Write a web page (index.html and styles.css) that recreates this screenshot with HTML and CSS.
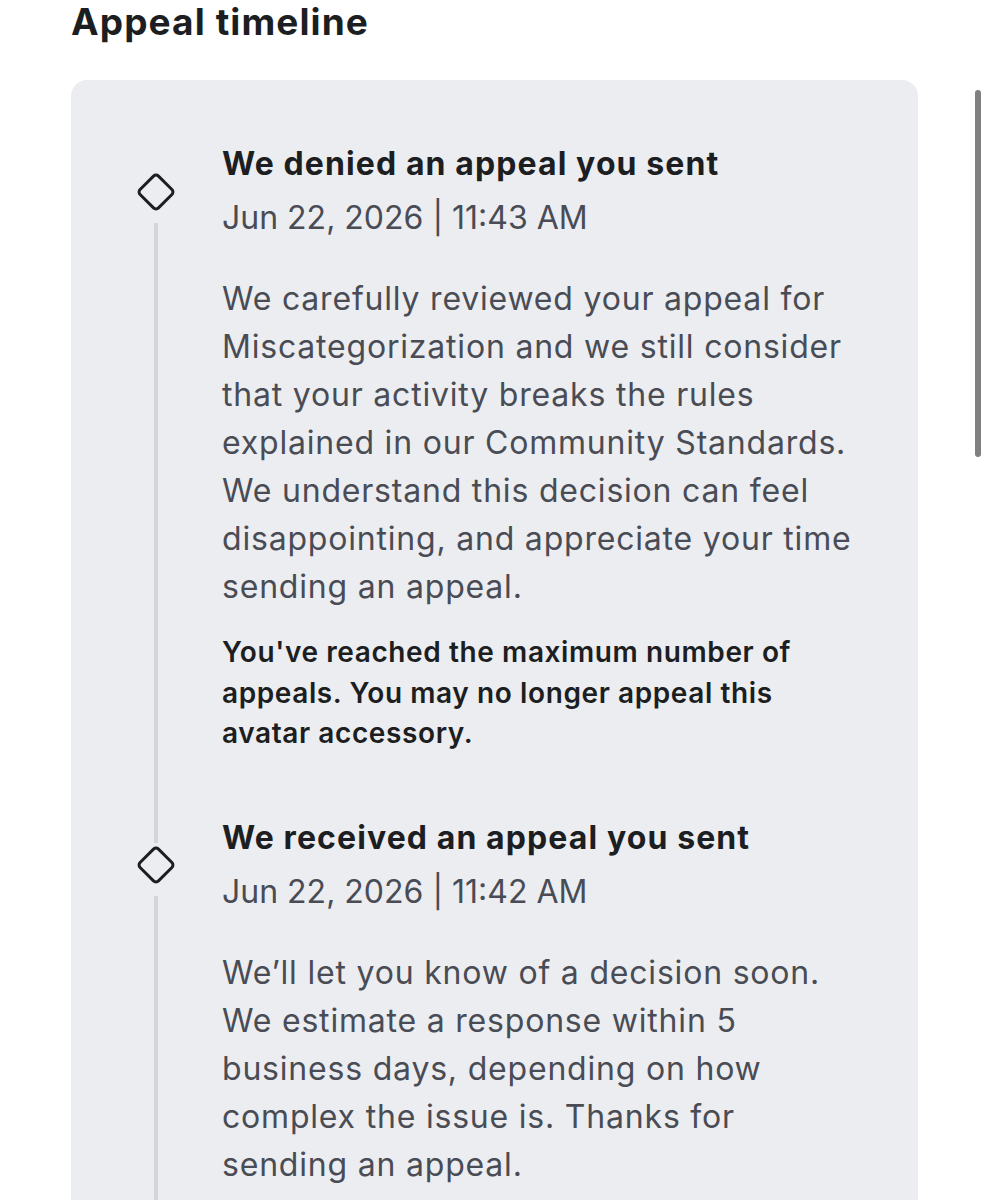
FILE: index.html
```html
<!DOCTYPE html>
<html lang="en">
<head>
<meta charset="utf-8">
<title>Appeal timeline</title>
<link rel="stylesheet" href="styles.css">
</head>
<body>
<div class="page">
  <h1 class="title">Appeal timeline</h1>
  <section class="card">
    <div class="item">
      <div class="marker">
        <span class="seg seg-top seg-hidden"></span>
        <svg class="diamond" width="40" height="40" viewBox="0 0 40 40" aria-hidden="true"><rect x="7" y="7" width="26" height="26" rx="3.5" transform="rotate(45 20 20)" fill="none" stroke="#1c1e21" stroke-width="3"/></svg>
        <span class="seg seg-bottom"></span>
      </div>
      <div class="head">
        <h2 class="event">We denied an appeal you sent</h2>
        <div class="date">Jun 22, 2026 | 11:43 AM</div>
      </div>
      <div class="rail"><span class="seg seg-fill"></span></div>
      <div class="content">
        <p class="body">We carefully reviewed your appeal for Miscategorization and we still consider that your activity breaks the rules explained in our Community Standards. We understand this decision can feel disappointing, and appreciate your time sending an appeal.</p>
        <p class="note">You've reached the maximum number of appeals. You may no longer appeal this avatar accessory.</p>
      </div>
    </div>
    <div class="item">
      <div class="marker">
        <span class="seg seg-top"></span>
        <svg class="diamond" width="40" height="40" viewBox="0 0 40 40" aria-hidden="true"><rect x="7" y="7" width="26" height="26" rx="3.5" transform="rotate(45 20 20)" fill="none" stroke="#1c1e21" stroke-width="3"/></svg>
        <span class="seg seg-bottom"></span>
      </div>
      <div class="head">
        <h2 class="event">We received an appeal you sent</h2>
        <div class="date">Jun 22, 2026 | 11:42 AM</div>
      </div>
      <div class="rail"><span class="seg seg-fill"></span></div>
      <div class="content">
        <p class="body">We’ll let you know of a decision soon. We estimate a response within 5 business days, depending on how complex the issue is. Thanks for sending an appeal.</p>
      </div>
    </div>
  </section>
  <div class="scrollbar"></div>
</div>
</body>
</html>
```

FILE: styles.css
```css
html, body {
  margin: 0;
  padding: 0;
  background: #ffffff;
  overflow: hidden;
}

body {
  font-family: Inter, "Noto Sans", "Liberation Sans", sans-serif;
  color: #1c1e21;
}

.page {
  position: relative;
  height: 1200px;
  overflow: hidden;
  padding: 0 71px;
}

.title {
  margin: 0;
  font-size: 37px;
  line-height: 44px;
  font-weight: 700;
  letter-spacing: 1.1px;
  color: #1c1e21;
}

.card {
  margin-top: 36px;
  width: 847px;
  box-sizing: border-box;
  background: #ecedf0;
  border-radius: 16px;
  padding: 64px 50px 80px 65px;
  min-height: 1300px;
}

.item {
  display: grid;
  grid-template-columns: 40px 1fr;
  grid-template-rows: auto 1fr;
  column-gap: 46px;
}

.marker {
  grid-column: 1;
  grid-row: 1;
  display: flex;
  flex-direction: column;
  align-items: center;
}

.diamond {
  display: block;
  flex: none;
}

.seg {
  display: block;
  width: 4px;
  background: #d4d5d9;
}

.seg-top {
  height: 25.5px;
  margin-bottom: 2px;
  flex: none;
}

.seg-hidden {
  background: transparent;
}

.seg-bottom {
  flex: 1;
  margin-top: 11px;
}

.rail {
  grid-column: 1;
  grid-row: 2;
  display: flex;
  justify-content: center;
}

.seg-fill {
  height: 100%;
}

.head {
  grid-column: 2;
  grid-row: 1;
}

.event {
  margin: 0;
  font-size: 32px;
  line-height: 40px;
  font-weight: 700;
  letter-spacing: 1.1px;
  color: #1c1e21;
}

.date {
  margin-top: 14px;
  font-size: 32px;
  line-height: 40px;
  color: #494c55;
}

.content {
  grid-column: 2;
  grid-row: 2;
  padding-top: 37px;
  padding-bottom: 64px;
}

.body {
  margin: 0;
  font-size: 32px;
  line-height: 48px;
  letter-spacing: 0.8px;
  color: #494c55;
}

.note {
  margin: 21px 0 0;
  font-size: 28px;
  line-height: 40.5px;
  font-weight: 600;
  letter-spacing: 0.6px;
  color: #1c1e21;
}

.scrollbar {
  position: absolute;
  left: 975px;
  top: 90px;
  width: 6px;
  height: 367px;
  border-radius: 3px;
  background: #808080;
}
```
